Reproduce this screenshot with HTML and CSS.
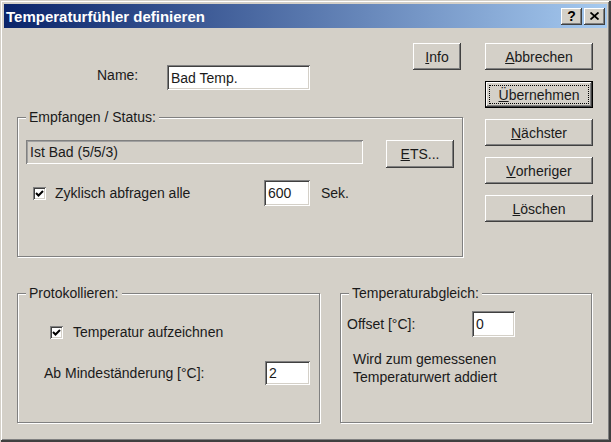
FILE: index.html
```html
<!DOCTYPE html>
<html lang="de">
<head>
<meta charset="utf-8">
<title>Temperaturfühler definieren</title>
<link rel="stylesheet" href="styles.css">
</head>
<body>
<div class="window">
  <div class="titlebar">
    <span class="title">Temperaturfühler definieren</span>
    <div class="tb-buttons">
      <span class="tb-btn help">?</span>
      <span class="tb-btn close"><svg width="9" height="8" viewBox="0 0 9 8"><path d="M0.5 0.5 L8.5 7.5 M8.5 0.5 L0.5 7.5" stroke="#000" stroke-width="1.8" fill="none"/></svg></span>
    </div>
  </div>
  <div class="client">
    <div class="top">
      <div class="main">
        <div class="name-row">
          <span class="name-label">Name:</span>
          <div class="field name-field">Bad Temp.</div>
          <button class="btn info-btn"><u>I</u>nfo</button>
        </div>
        <fieldset class="group status-group">
          <legend>Empfangen / Status:</legend>
          <div class="status-row">
            <div class="field readonly">Ist Bad (5/5/3)</div>
            <button class="btn ets-btn"><u>E</u>TS...</button>
          </div>
          <div class="cyc-row">
            <span class="check"><svg width="9" height="9" viewBox="0 0 9 9"><path d="M1 4 L3.5 6.5 L8 2" stroke="#000" stroke-width="2" fill="none"/></svg></span>
            <span class="cyc-label">Zyklisch abfragen alle</span>
            <div class="field small-field">600</div>
            <span class="unit">Sek.</span>
          </div>
        </fieldset>
      </div>
      <div class="side">
        <button class="btn side-btn"><u>A</u>bbrechen</button>
        <button class="btn side-btn default"><span class="focus"><u>Ü</u>bernehmen</span></button>
        <button class="btn side-btn"><u>N</u>ächster</button>
        <button class="btn side-btn"><u>V</u>orheriger</button>
        <button class="btn side-btn"><u>L</u>öschen</button>
      </div>
    </div>
    <div class="bottom">
      <fieldset class="group proto-group">
        <legend>Protokollieren:</legend>
        <div class="log-row">
          <span class="check"><svg width="9" height="9" viewBox="0 0 9 9"><path d="M1 4 L3.5 6.5 L8 2" stroke="#000" stroke-width="2" fill="none"/></svg></span>
          <span class="log-label">Temperatur aufzeichnen</span>
        </div>
        <div class="min-row">
          <span class="min-label">Ab Mindeständerung [°C]:</span>
          <div class="field min-field">2</div>
        </div>
      </fieldset>
      <fieldset class="group adjust-group">
        <legend>Temperaturabgleich:</legend>
        <div class="offset-row">
          <span class="offset-label">Offset [°C]:</span>
          <div class="field offset-field">0</div>
        </div>
        <p class="note">Wird zum gemessenen<br>Temperaturwert addiert</p>
      </fieldset>
    </div>
  </div>
</div>
</body>
</html>
```
FILE: styles.css
```css
html, body {
  margin: 0;
  padding: 0;
}
body {
  width: 611px;
  height: 442px;
  overflow: hidden;
  font-family: "Liberation Sans", Arial, sans-serif;
  font-size: 14px;
  color: #1a1a1a;
  background: #d4d0c8;
}
.window {
  width: 611px;
  height: 442px;
  box-sizing: border-box;
  padding: 4px;
  background: #d4d0c8;
  box-shadow: inset 1px 1px #d4d0c8, inset -2px -2px #404040, inset 2px 2px #fff, inset -3px -3px #808080;
  display: flex;
  flex-direction: column;
}
.titlebar {
  height: 24px;
  flex: 0 0 24px;
  background: linear-gradient(to right, #0a246a, #a6caf0);
  display: flex;
  align-items: center;
  padding-left: 2px;
  color: #fff;
}
.title {
  font-weight: bold;
  font-size: 15px;
}
.tb-buttons {
  margin-left: auto;
  display: flex;
  gap: 2px;
  padding-right: 2px;
}
.tb-btn {
  width: 21px;
  height: 17px;
  box-sizing: border-box;
  background: #d4d0c8;
  box-shadow: inset -1px -1px #404040, inset 1px 1px #fff, inset -2px -2px #808080;
  display: flex;
  align-items: center;
  justify-content: center;
  color: #000;
  font-weight: bold;
  font-size: 14px;
  line-height: 1;
}
.client {
  flex: 1;
  padding: 15px 0 0 13px;
}
.top {
  display: flex;
  align-items: flex-start;
}
.main {
  width: 446px;
}
.name-row {
  display: flex;
  height: 47px;
}
.name-label {
  margin-left: 80px;
  width: 70px;
  align-self: flex-end;
  line-height: 25px;
  margin-bottom: 2px;
}
.field {
  box-sizing: border-box;
  background: #fff;
  box-shadow: inset 1px 1px #808080, inset -1px -1px #fff, inset 2px 2px #404040, inset -2px -2px #d4d0c8;
  display: flex;
  align-items: center;
  padding-left: 4px;
}
.name-field {
  width: 143px;
  height: 25px;
  align-self: flex-end;
}
.btn {
  box-sizing: border-box;
  height: 27px;
  font: inherit;
  color: #1a1a1a;
  background: #d4d0c8;
  border: 0;
  padding: 0;
  margin: 0;
  box-shadow: inset -1px -1px #404040, inset 1px 1px #fff, inset -2px -2px #808080, inset 2px 2px #d4d0c8;
  display: flex;
  align-items: center;
  justify-content: center;
}
.info-btn {
  margin-left: 103px;
  width: 48px;
}
.group {
  margin: 0;
  padding: 0;
  min-inline-size: 0;
  border: 1px solid #808080;
  box-shadow: inset 1px 1px #fff, 1px 1px #fff;
  box-sizing: border-box;
}
.group legend {
  margin-left: 8px;
  padding: 0 3px;
  line-height: 16px;
  background: #d4d0c8;
}
.status-group {
  margin-top: 19px;
  width: 446px;
  height: 148px;
}
.status-row {
  display: flex;
  align-items: flex-start;
  margin: 15px 0 0 8px;
}
.readonly {
  width: 337px;
  height: 24px;
  background: #d4d0c8;
  box-shadow: inset 1px 1px #808080, inset -1px -1px #fff, inset 2px 2px #a0a0a0;
}
.ets-btn {
  margin-left: 23px;
  width: 68px;
  height: 28px;
}
.cyc-row {
  display: flex;
  align-items: center;
  margin-top: 12px;
  height: 26px;
}
.check {
  box-sizing: border-box;
  width: 13px;
  height: 13px;
  background: #fff;
  box-shadow: inset 1px 1px #808080, inset -1px -1px #fff, inset 2px 2px #404040, inset -2px -2px #d4d0c8;
  display: flex;
  align-items: center;
  justify-content: center;
}
.cyc-row .check {
  margin-left: 15px;
}
.cyc-label {
  margin-left: 9px;
  width: 209px;
}
.small-field {
  width: 46px;
  height: 26px;
}
.unit {
  margin-left: 11px;
}
.side {
  margin-left: 22px;
  width: 108px;
  display: flex;
  flex-direction: column;
  gap: 11px;
}
.side-btn {
  width: 108px;
}
.side-btn.default {
  padding: 4px;
  box-shadow: inset 0 0 0 1px #000, inset -2px -2px #404040, inset 2px 2px #fff, inset -3px -3px #808080;
}
.focus {
  flex: 1;
  align-self: stretch;
  border: 1px dotted #000;
  display: flex;
  align-items: center;
  justify-content: center;
}
.bottom {
  display: flex;
  margin-top: 28px;
}
.proto-group {
  width: 303px;
  height: 138px;
}
.log-row {
  display: flex;
  align-items: center;
  height: 16px;
  margin-top: 23px;
}
.log-row .check {
  margin-left: 32px;
}
.log-label {
  margin-left: 10px;
}
.min-row {
  display: flex;
  align-items: center;
  margin-top: 21px;
}
.min-label {
  margin-left: 26px;
  width: 221px;
}
.min-field {
  width: 45px;
  height: 24px;
}
.adjust-group {
  margin-left: 20px;
  width: 252px;
  height: 138px;
}
.offset-row {
  display: flex;
  align-items: center;
  margin-top: 10px;
}
.offset-label {
  margin-left: 6px;
  width: 125px;
}
.offset-field {
  width: 43px;
  height: 26px;
}
.note {
  margin: 13px 0 0 12px;
  line-height: 18px;
}
```
